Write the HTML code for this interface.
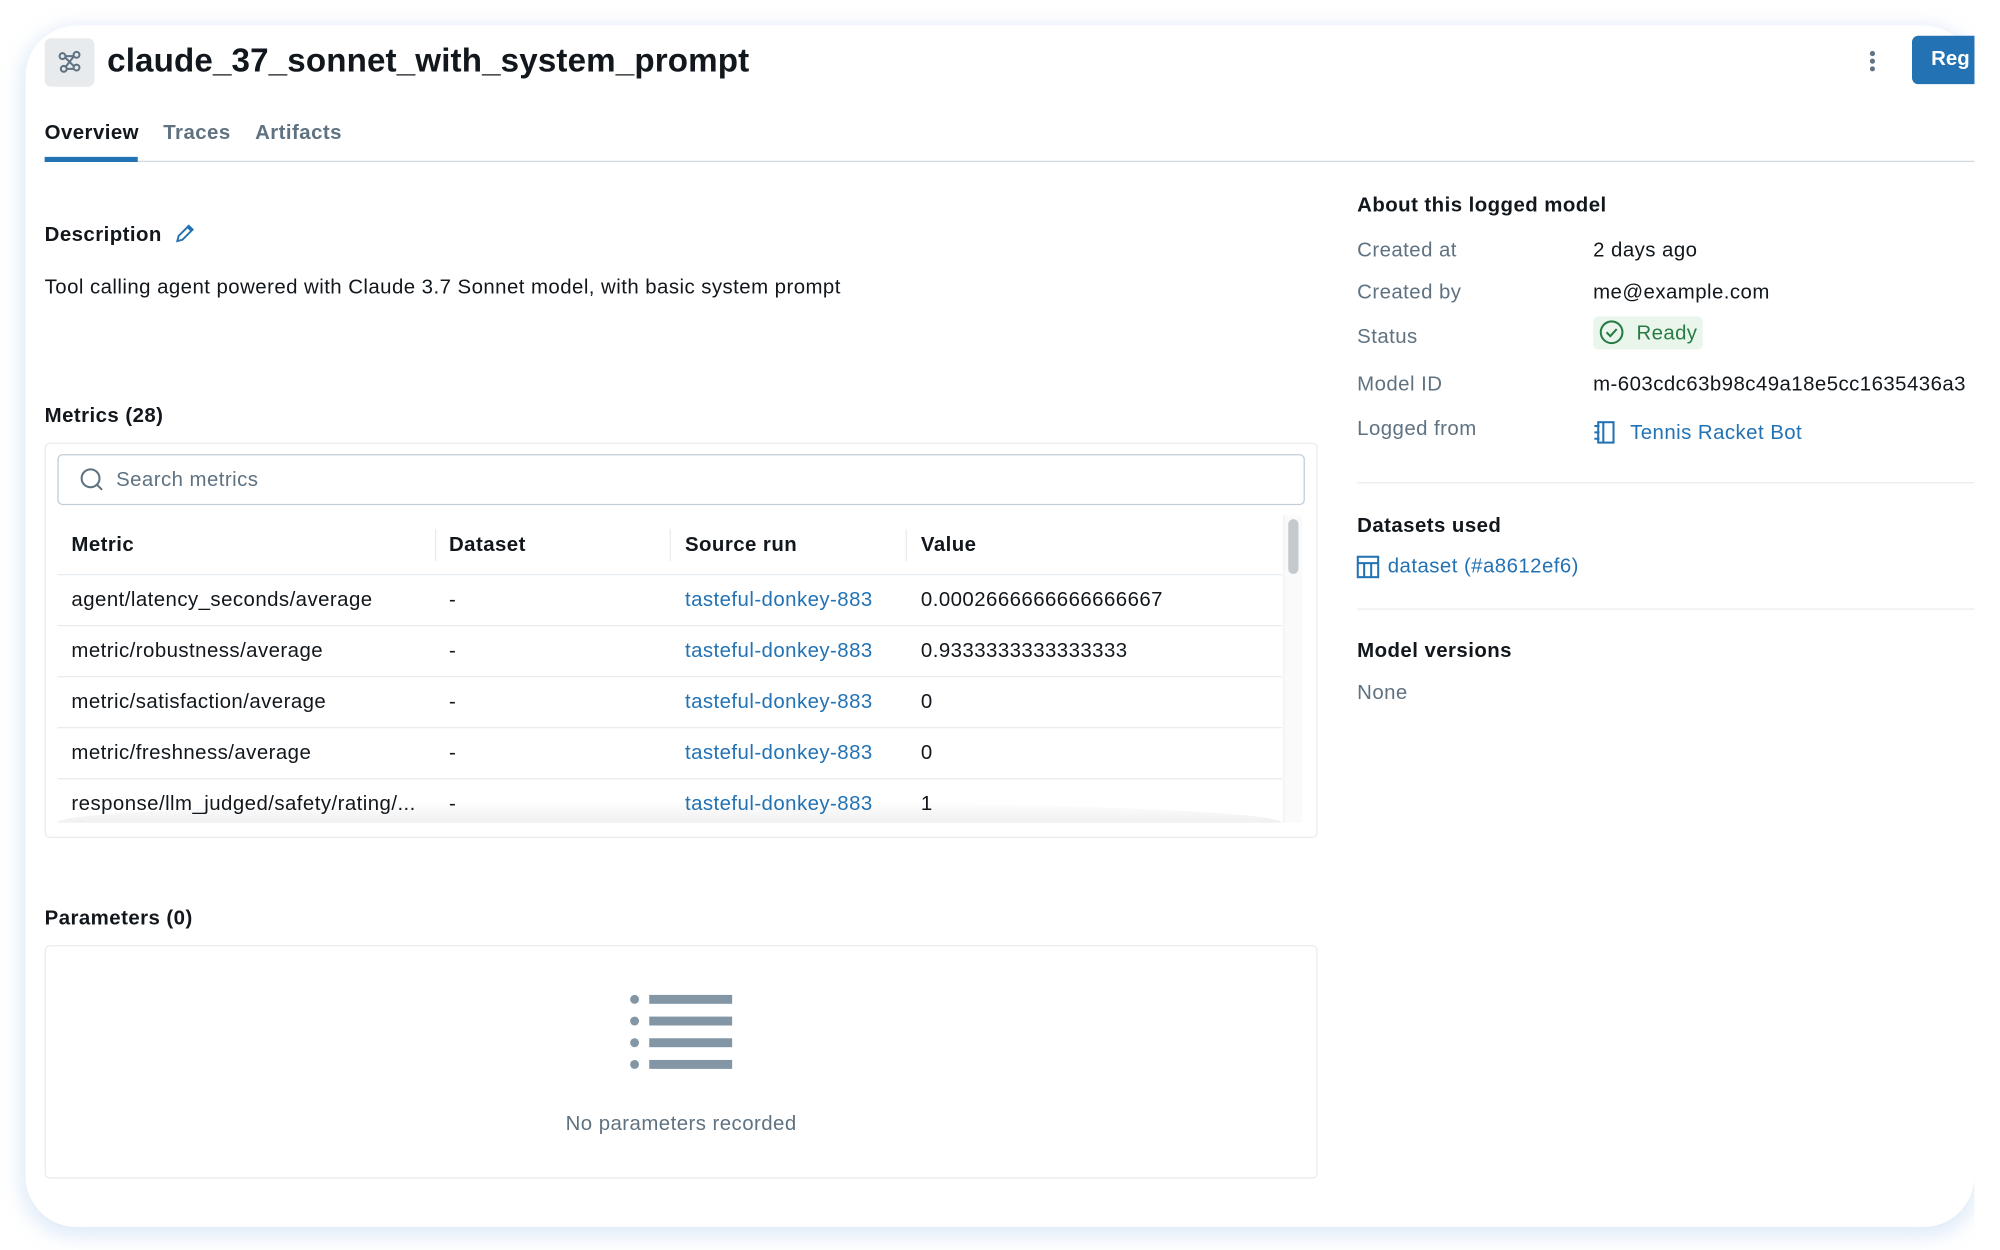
<!DOCTYPE html>
<html><head><meta charset="utf-8"><style>
html,body{margin:0;padding:0;width:2000px;height:1250px;overflow:hidden;background:#fff;font-family:"Liberation Sans",Arial,sans-serif;}
#w{position:absolute;left:0;top:0;width:1568px;height:980px;transform:scale(1.27551);transform-origin:0 0;}
.card{position:absolute;left:20px;top:20px;width:1528px;height:942px;background:#fff;border-radius:40px;box-shadow:0 4px 14px 4px rgba(170,200,235,.35);overflow:hidden;}
.a{position:absolute;white-space:nowrap;}
.t{font-size:16px;color:#11171c;letter-spacing:.35px;}
.g{color:#5f7281;letter-spacing:.35px;}
.b{font-weight:bold;}
.row{position:absolute;left:45px;width:960px;height:40px;border-bottom:1px solid #e8ecf0;}
.row span{position:absolute;top:12px;font-size:16px;letter-spacing:.35px;color:#11171c;white-space:nowrap;}
.s{font-size:16px;}
</style></head><body><div id="w">
<div class="card"></div>
<div class="a" style="left:35px;top:30px;width:39px;height:38px;background:#e8ebee;border-radius:5px;"></div>
<svg class="a" style="left:44px;top:38px" width="22" height="22" viewBox="0 0 22 22" fill="none" stroke="#5f7281" stroke-width="1.6"><circle cx="5" cy="6" r="2.3"/><circle cx="16" cy="5" r="2.3"/><circle cx="6" cy="16" r="2.3"/><circle cx="16" cy="15" r="2.3"/><path d="M7 7l7 7M14 6l-7 9M7 6h7M8 16h6"/></svg>
<div class="a b" style="left:84px;top:32px;font-size:26px;color:#11171c;letter-spacing:.1px;">claude_37_sonnet_with_system_prompt</div>
<div class="a" style="left:1466px;top:40px;width:4px;height:4px;border-radius:2px;background:#5f7281;box-shadow:0 6px 0 #5f7281,0 12px 0 #5f7281;"></div>
<div class="a" style="left:1499px;top:28px;width:60px;height:38px;background:#2272b4;border-radius:5px;"></div>
<div class="a b" style="left:1514px;top:38px;font-size:16px;color:#fff;">Reg</div>
<div class="a" style="left:1548px;top:0;width:20px;height:980px;background:#fff;"></div>
<div class="a t b" style="left:35px;top:96px;">Overview</div>
<div class="a g b s" style="left:128px;top:96px;">Traces</div>
<div class="a g b s" style="left:200px;top:96px;">Artifacts</div>
<div class="a" style="left:35px;top:126px;width:1513px;height:1px;background:#d1d9e1;"></div>
<div class="a" style="left:35px;top:123px;width:73px;height:4px;background:#2272b4;"></div>
<div class="a t b" style="left:35px;top:176px;">Description</div>
<svg class="a" style="left:136px;top:174px" width="18" height="18" viewBox="0 0 18 18" fill="none" stroke="#2272b4" stroke-width="1.5"><path d="M3 15l1-4 8-8 3 3-8 8z M11 4l3 3"/></svg>
<div class="a t" style="left:35px;top:217px;">Tool calling agent powered with Claude 3.7 Sonnet model, with basic system prompt</div>
<div class="a t b" style="left:35px;top:318px;">Metrics (28)</div>
<div class="a" style="left:35px;top:347px;width:996px;height:308px;border:1px solid #e8ecf0;border-radius:4px;"></div>
<div class="a" style="left:45px;top:356px;width:976px;height:38px;border:1px solid #c0cdd8;border-radius:4px;"></div>
<svg class="a" style="left:62px;top:366px" width="20" height="20" viewBox="0 0 20 20" fill="none" stroke="#5f7281" stroke-width="1.6"><circle cx="9" cy="9" r="7"/><path d="M14 14l4 4"/></svg>
<div class="a g s" style="left:91px;top:368px;">Search metrics</div>
<div class="row" style="top:410px;"><span class="b" style="left:11px;top:9px">Metric</span><span class="b" style="left:307px;top:9px">Dataset</span><span class="b" style="left:492px;top:9px">Source run</span><span class="b" style="left:677px;top:9px">Value</span></div>
<div class="a" style="left:341px;top:415px;width:1px;height:25px;background:#e8ecf0"></div>
<div class="a" style="left:525px;top:415px;width:1px;height:25px;background:#e8ecf0"></div>
<div class="a" style="left:710px;top:415px;width:1px;height:25px;background:#e8ecf0"></div>
<div class="row" style="top:450px;"><span style="left:11px">agent/latency_seconds/average</span><span style="left:307px">-</span><span style="left:492px;color:#2272b4">tasteful-donkey-883</span><span style="left:677px">0.0002666666666666667</span></div>
<div class="row" style="top:490px;"><span style="left:11px">metric/robustness/average</span><span style="left:307px">-</span><span style="left:492px;color:#2272b4">tasteful-donkey-883</span><span style="left:677px">0.9333333333333333</span></div>
<div class="row" style="top:530px;"><span style="left:11px">metric/satisfaction/average</span><span style="left:307px">-</span><span style="left:492px;color:#2272b4">tasteful-donkey-883</span><span style="left:677px">0</span></div>
<div class="row" style="top:570px;"><span style="left:11px">metric/freshness/average</span><span style="left:307px">-</span><span style="left:492px;color:#2272b4">tasteful-donkey-883</span><span style="left:677px">0</span></div>
<div class="row" style="top:610px;height:35px;border:none;overflow:hidden"><span style="left:11px">response/llm_judged/safety/rating/...</span><span style="left:307px">-</span><span style="left:492px;color:#2272b4">tasteful-donkey-883</span><span style="left:677px">1</span></div>
<div class="a" style="left:45px;top:628px;width:960px;height:17px;background:linear-gradient(rgba(0,0,0,0),rgba(0,0,0,.06));border-radius:50% 50% 0 0/100% 100% 0 0;"></div>
<div class="a" style="left:1006px;top:404px;width:14px;height:241px;border-left:1px solid #eef0f2;background:#fafafa"></div>
<div class="a" style="left:1010px;top:407px;width:8px;height:43px;border-radius:4px;background:#c4c9ce"></div>
<div class="a t b" style="left:35px;top:712px;">Parameters (0)</div>
<div class="a" style="left:35px;top:741px;width:996px;height:181px;border:1px solid #e8ecf0;border-radius:4px;"></div>
<div class="a" style="left:494px;top:780px;">
<div style="position:absolute;left:0;top:0;width:7px;height:7px;border-radius:4px;background:#8396a5"></div><div style="position:absolute;left:15px;top:0;width:65px;height:7px;background:#8396a5"></div>
<div style="position:absolute;left:0;top:17px;width:7px;height:7px;border-radius:4px;background:#8396a5"></div><div style="position:absolute;left:15px;top:17px;width:65px;height:7px;background:#8396a5"></div>
<div style="position:absolute;left:0;top:34px;width:7px;height:7px;border-radius:4px;background:#8396a5"></div><div style="position:absolute;left:15px;top:34px;width:65px;height:7px;background:#8396a5"></div>
<div style="position:absolute;left:0;top:51px;width:7px;height:7px;border-radius:4px;background:#8396a5"></div><div style="position:absolute;left:15px;top:51px;width:65px;height:7px;background:#8396a5"></div>
</div>
<div class="a g s" style="left:35px;width:998px;text-align:center;top:873px;">No parameters recorded</div>

<div class="a t b" style="left:1064px;top:153px;">About this logged model</div>
<div class="a g s" style="left:1064px;top:188px;">Created at</div>
<div class="a t" style="left:1249px;top:188px;">2 days ago</div>
<div class="a g s" style="left:1064px;top:221px;">Created by</div>
<div class="a t" style="left:1249px;top:221px;">me@example.com</div>
<div class="a g s" style="left:1064px;top:256px;">Status</div>
<div class="a" style="left:1249px;top:248px;width:86px;height:26px;border-radius:4px;background:#eaf6ec"></div>
<svg class="a" style="left:1253px;top:250px" width="21" height="21" viewBox="0 0 21 21" fill="none" stroke="#277c43" stroke-width="1.6"><circle cx="10.5" cy="10.5" r="8.5"/><path d="M6.5 10.5l3 3 5-5.5"/></svg>
<div class="a s" style="left:1283px;top:253px;color:#277c43;letter-spacing:.3px;">Ready</div>
<div class="a g s" style="left:1064px;top:293px;">Model ID</div>
<div class="a t" style="left:1249px;top:293px;">m-603cdc63b98c49a18e5cc1635436a3</div>
<div class="a g s" style="left:1064px;top:328px;">Logged from</div>
<svg class="a" style="left:1248px;top:329px" width="20" height="20" viewBox="0 0 20 20" fill="none" stroke="#2272b4" stroke-width="1.6"><rect x="5" y="2" width="12" height="16"/><path d="M9 2v16M2 5h4M2 10h4M2 15h4"/></svg>
<div class="a s" style="left:1278px;top:331px;color:#2272b4;letter-spacing:.35px;">Tennis Racket Bot</div>
<div class="a" style="left:1548px;top:20px;width:20px;height:960px;background:#fff;"></div>
<div class="a" style="left:1064px;top:378px;width:484px;height:1px;background:#e8ecf0"></div>
<div class="a t b" style="left:1064px;top:404px;">Datasets used</div>
<svg class="a" style="left:1063px;top:435px" width="19" height="19" viewBox="0 0 19 19" fill="none" stroke="#2272b4" stroke-width="1.6"><rect x="1.5" y="1.5" width="16" height="16"/><path d="M1.5 6.5h16M6.5 6.5v11M12 6.5v11"/></svg>
<div class="a s" style="left:1088px;top:436px;color:#2272b4;letter-spacing:.35px;">dataset (#a8612ef6)</div>
<div class="a" style="left:1064px;top:477px;width:484px;height:1px;background:#e8ecf0"></div>
<div class="a t b" style="left:1064px;top:502px;">Model versions</div>
<div class="a g s" style="left:1064px;top:535px;">None</div>
</div></body></html>
